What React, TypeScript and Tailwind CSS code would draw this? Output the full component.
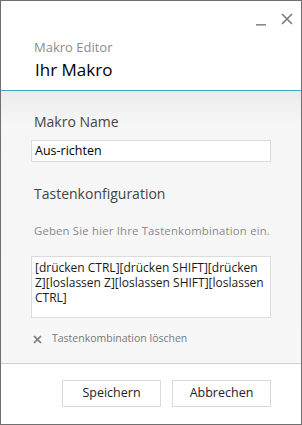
import { FC } from 'react';

const font = { fontFamily: '"Open Sans", "Noto Sans", sans-serif' };

const App: FC = () => {
  return (
    <div className="w-[302px] h-[425px] border border-[#6f6f6f] bg-white flex flex-col overflow-hidden" style={font}>
      <div className="h-[89px] bg-white flex flex-col relative">
        <div className="flex justify-end items-center gap-[15px] pr-[8px] pt-[8px] h-[28px]">
          <svg width="10" height="10" viewBox="0 0 10 10" className="mt-[4px]">
            <rect x="0" y="8" width="10" height="1.6" fill="#8a8a8a" />
          </svg>
          <svg width="12" height="12" viewBox="0 0 12 12">
            <path d="M1 1L11 11M11 1L1 11" stroke="#7a7a7a" strokeWidth="1.6" />
          </svg>
        </div>
        <div className="pl-[33px] pt-[9px] text-[13px] leading-[18px] text-[#8c8c8c]">Makro Editor</div>
        <div className="pl-[34px] pt-[3px] text-[17px] leading-[22px] text-black">Ihr Makro</div>
      </div>
      <div className="h-px bg-[#3fa8c4]" />
      <div className="flex-1 flex flex-col bg-gradient-to-b from-[#ebebeb] via-[#f6f6f6] via-[12%] to-[#f7f7f7] px-[30px]">
        <div className="pt-[21px] pl-[3px] text-[14px] leading-[19px] text-[#444]">Makro Name</div>
        <div className="mt-[9px] h-[22px] w-[240px] border border-[#dcdcdc] bg-white pl-[3px] text-[12.5px] leading-[20px] text-black">
          Aus-richten
        </div>
        <div className="pt-[22px] pl-[3px] text-[14px] leading-[19px] text-[#444]">Tastenkonfiguration</div>
        <div className="pt-[20px] pl-[3px] text-[11.3px] leading-[16px] text-[#8a8a8a] tracking-[0.2px] whitespace-nowrap">
          Geben Sie hier Ihre Tastenkombination ein.
        </div>
        <div className="mt-[17px] h-[62px] w-[240px] border border-[#dcdcdc] bg-white pl-[3px] pr-[2px] pt-[3px] text-[12px] leading-[15px] text-[#1a1a1a]">
          <div className="whitespace-nowrap">[drücken CTRL][drücken SHIFT][drücken</div>
          <div className="whitespace-nowrap">Z][loslassen Z][loslassen SHIFT][loslassen</div>
          <div className="whitespace-nowrap">CTRL]</div>
        </div>
        <div className="mt-[13px] flex items-center pl-[2px] h-[16px]">
          <svg width="9" height="9" viewBox="0 0 9 9">
            <path d="M1 1L8 8M8 1L1 8" stroke="#7a7a7a" strokeWidth="1.7" />
          </svg>
          <span className="ml-[10px] text-[10.5px] text-[#777]">Tastenkombination löschen</span>
        </div>
      </div>
      <div className="h-px bg-[#cfcfcf]" />
      <div className="h-[60px] bg-white flex justify-end items-start gap-[11px] pr-[30px] pt-[16px]">
        <button className="w-[99px] h-[27px] border border-[#dadada] bg-white text-[12.5px] text-[#222]">Speichern</button>
        <button className="w-[99px] h-[27px] border border-[#dadada] bg-white text-[12.5px] text-[#222]">Abbrechen</button>
      </div>
    </div>
  );
};

export default App;
